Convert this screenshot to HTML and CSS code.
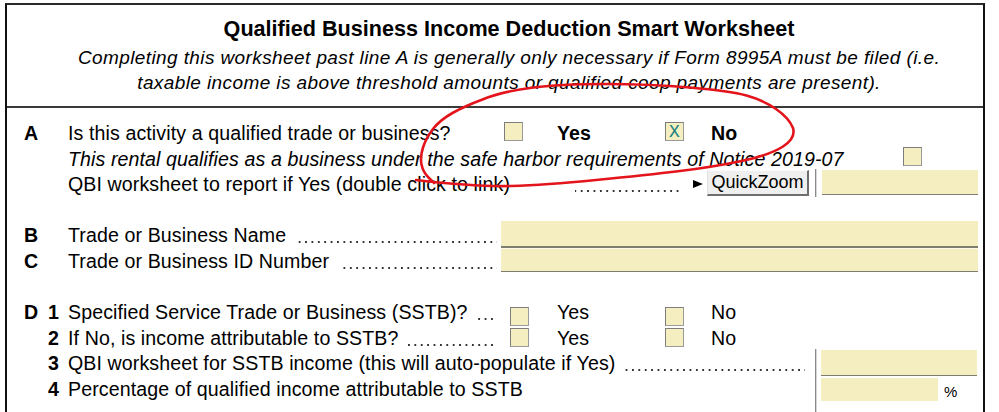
FILE: index.html
```html
<!DOCTYPE html>
<html lang="en">
<head>
<meta charset="utf-8">
<title>Qualified Business Income Deduction Smart Worksheet</title>
<link rel="stylesheet" href="styles.css">
</head>
<body>
<div class="sheet">
  <div class="head">
    <div class="title">Qualified Business Income Deduction Smart Worksheet</div>
    <div class="sub">Completing this worksheet past line A is generally only necessary if Form 8995A must be filed (i.e.<br>taxable income is above threshold amounts or qualified coop payments are present).</div>
  </div>
  <div class="body">
    <div class="line">
      <span class="key"><span class="k1">A</span></span>
      <span class="lead w-a1">Is this activity a qualified trade or business?</span>
      <span class="opt opt-a"><span class="cb mt1"></span><b class="ot ot-yes">Yes</b></span>
      <span class="opt"><span class="cb mt1"><span class="x">X</span></span><b class="ot ot-no">No</b></span>
    </div>
    <div class="line">
      <span class="key"></span>
      <span class="lead w-a2"><i>This rental qualifies as a business under the safe harbor requirements of Notice 2019-07</i></span>
      <span class="cb mt0"></span>
    </div>
    <div class="line">
      <span class="key"></span>
      <span class="lead w-a3"><span>QBI worksheet to report if Yes (double click to link)</span><span class="dots dots-a3"></span></span>
      <span class="arrow"></span>
      <span class="qz">QuickZoom</span>
      <span class="vsep"></span>
      <span class="field f-a3"></span>
    </div>
    <div class="line"></div>
    <div class="line">
      <span class="key"><span class="k1">B</span></span>
      <span class="lead w-bc"><span>Trade or Business Name</span><span class="dots"></span></span>
      <span class="field f-b"></span>
    </div>
    <div class="line">
      <span class="key"><span class="k1">C</span></span>
      <span class="lead w-bc"><span>Trade or Business ID Number</span><span class="dots"></span></span>
      <span class="field f-c"></span>
    </div>
    <div class="line"></div>
    <div class="line">
      <span class="key"><span class="k1">D</span><span class="k2">1</span></span>
      <span class="lead w-d"><span>Specified Service Trade or Business (SSTB)?</span><span class="dots dots-d"></span></span>
      <span class="opt opt-d"><span class="cb mt7"></span><span class="ot ot-yes-d">Yes</span></span>
      <span class="opt"><span class="cb mt7"></span><span class="ot ot-no">No</span></span>
    </div>
    <div class="line">
      <span class="key"><span class="k1"></span><span class="k2">2</span></span>
      <span class="lead w-d"><span>If No, is income attributable to SSTB?</span><span class="dots dots-d"></span></span>
      <span class="opt opt-d"><span class="cb mt3"></span><span class="ot ot-yes-d">Yes</span></span>
      <span class="opt"><span class="cb mt3"></span><span class="ot ot-no">No</span></span>
    </div>
    <div class="dgroup">
      <div class="dleft">
        <div class="line">
          <span class="key"><span class="k1"></span><span class="k2">3</span></span>
          <span class="lead w-d3"><span>QBI worksheet for SSTB income (this will auto-populate if Yes)</span><span class="dots dots-d3"></span></span>
        </div>
        <div class="line">
          <span class="key"><span class="k1"></span><span class="k2">4</span></span>
          <span class="lead w-d3"><span>Percentage of qualified income attributable to SSTB</span></span>
        </div>
      </div>
      <div class="rcol">
        <span class="field f-d3"></span>
        <div class="pct-row"><span class="field f-d4"></span><span class="pct">%</span></div>
      </div>
    </div>
  </div>
</div>
<svg class="ink" width="999" height="412" viewBox="0 0 999 412" aria-hidden="true">
  <path d="M416 180 Q477 187 511 186 Q545 185 596 180 Q647 175 680 171 Q713 167 741.5 161 Q770 155 783 146.5 Q796 138 793 128 Q789 118 776 109 Q763 100 746.5 95.5 Q730 91 690 87.5 Q650 84 605 84 Q560 84 530 88 Q500 92 482.5 99.5 Q465 106 452.5 113 Q440 120 433 129 Q426 138 423 147.5 Q420 157 421.5 164.5 Q423 172 428.5 177.5 L434 183" fill="none" stroke="#e3141c" stroke-width="2.6" stroke-linecap="round" stroke-linejoin="round"/>
</svg>
</body>
</html>
```
FILE: styles.css
```css
html, body {
  margin: 0;
  padding: 0;
  overflow: hidden;
  background: #fff;
}
body {
  font-family: "Liberation Sans", Arial, sans-serif;
  color: #000;
  position: relative;
  width: 999px;
  height: 412px;
}
.sheet {
  margin: 3px 0 0 5px;
  width: 980px;
  height: 409px;
  box-sizing: border-box;
  border: 2px solid #111;
  border-top-color: #2a2a2a;
  border-bottom: none;
}
.head {
  height: 103px;
  box-sizing: border-box;
  border-bottom: 2px solid #3a3a3a;
  padding: 11px 0 0 28px;
  text-align: center;
}
.title {
  font-weight: bold;
  font-size: 21.6px;
  line-height: 26px;
}
.sub {
  font-style: italic;
  font-size: 19px;
  line-height: 25px;
  margin-top: 3px;
  letter-spacing: 0.4px;
}
.body {
  padding: 13px 5px 0 17px;
  font-size: 19.6px;
  letter-spacing: 0.1px;
}
.line {
  display: flex;
  align-items: flex-start;
  height: 25.6px;
  line-height: 25.6px;
  white-space: nowrap;
}
.key {
  flex: none;
  width: 44px;
  display: flex;
  font-weight: bold;
}
.k1 { width: 24px; }
.k2 { width: 20px; }
.lead {
  flex: none;
  display: flex;
}
.w-a1 { width: 436px; }
.w-a2 { width: 835px; }
.w-a3 { width: 625px; }
.w-bc { width: 433px; }
.w-d { width: 442px; }
.w-d3 { width: 747px; }
.dots {
  flex: 1;
  align-self: stretch;
  margin: 0 4px 0 10px;
  background-image: linear-gradient(to right, #333 1.5px, transparent 1.5px);
  background-size: 6.4px 1.5px;
  background-repeat: repeat-x;
  background-position: right 0 top 18px;
}
.dots-a3 {
  flex: none;
  width: 108px;
  margin: 0 10px 0 auto;
}
.dots-d { margin-right: 13px; margin-left: 6px; }
.dots-d3 { margin-right: 10px; }
.opt {
  flex: none;
  display: flex;
  align-items: flex-start;
}
.opt-a { width: 161px; }
.opt-d { width: 155px; }
.ot-yes { margin-left: 34px; }
.ot-yes-d { margin-left: 28px; }
.ot-no { margin-left: 27px; }
.cb {
  flex: none;
  width: 19px;
  height: 19px;
  box-sizing: border-box;
  background: #f4eec1;
  border: 1px solid #7d7d7d;
  border-right-color: #9a9a9a;
  border-bottom-color: #9a9a9a;
  display: flex;
  align-items: center;
  justify-content: center;
}
.mt0 { margin-top: 0.5px; }
.mt1 { margin-top: 1px; }
.mt3 { margin-top: 2.6px; }
.mt7 { margin-top: 7px; }
.x {
  font-family: "Liberation Mono", "Courier New", monospace;
  font-size: 18px;
  line-height: 16px;
  color: #147f7c;
  letter-spacing: 0;
}
.arrow {
  flex: none;
  width: 0;
  height: 0;
  margin: 8px 0 0 0;
  border-left: 10px solid #000;
  border-top: 4.5px solid transparent;
  border-bottom: 4.5px solid transparent;
}
.qz {
  flex: none;
  margin: -2px 0 0 4px;
  width: 102px;
  height: 26px;
  box-sizing: border-box;
  background: #efefef;
  border-top: 1px solid #fbfbfb;
  border-left: 1px solid #e0e0e0;
  border-right: 2px solid #6e6e6e;
  border-bottom: 2px solid #6e6e6e;
  font-size: 18px;
  line-height: 22px;
  letter-spacing: 0;
  text-align: center;
}
.vsep {
  flex: none;
  margin: -3px 0 0 6px;
  width: 1px;
  height: 28px;
  background: #8a8a8a;
  border-right: 1px solid #d6d6d6;
}
.field {
  flex: none;
  display: block;
  box-sizing: border-box;
  background: #f4eec1;
  border-bottom: 1px solid #7e7e70;
}
.f-a3 { margin: -2.4px 0 0 5px; width: 156px; height: 25.5px; }
.f-b { width: 477px; height: 26.5px; margin-top: -2.3px; border-bottom: 2px solid #7e7e70; }
.f-c { width: 477px; height: 24px; margin-top: -0.5px; border-top: 1px solid #fffbe6; }
.dgroup {
  display: flex;
  align-items: flex-start;
}
.dleft { width: 791px; flex: none; }
.rcol {
  flex: none;
  margin-top: -2px;
  height: 80px;
  padding-left: 5px;
  border-left: 1px solid #8a8a8a;
  box-shadow: 1px 0 0 #d6d6d6 inset;
  display: flex;
  flex-direction: column;
}
.f-d3 { width: 156px; height: 26px; margin-top: 0.5px; }
.pct-row {
  display: flex;
  align-items: flex-start;
  margin-top: 2px;
}
.f-d4 { width: 117px; height: 23.5px; border-bottom: none; }
.pct {
  margin: 7px 0 0 6px;
  font-size: 15px;
  line-height: 14px;
  letter-spacing: 0;
}
.ink {
  position: absolute;
  left: 0;
  top: 0;
  pointer-events: none;
}
```
